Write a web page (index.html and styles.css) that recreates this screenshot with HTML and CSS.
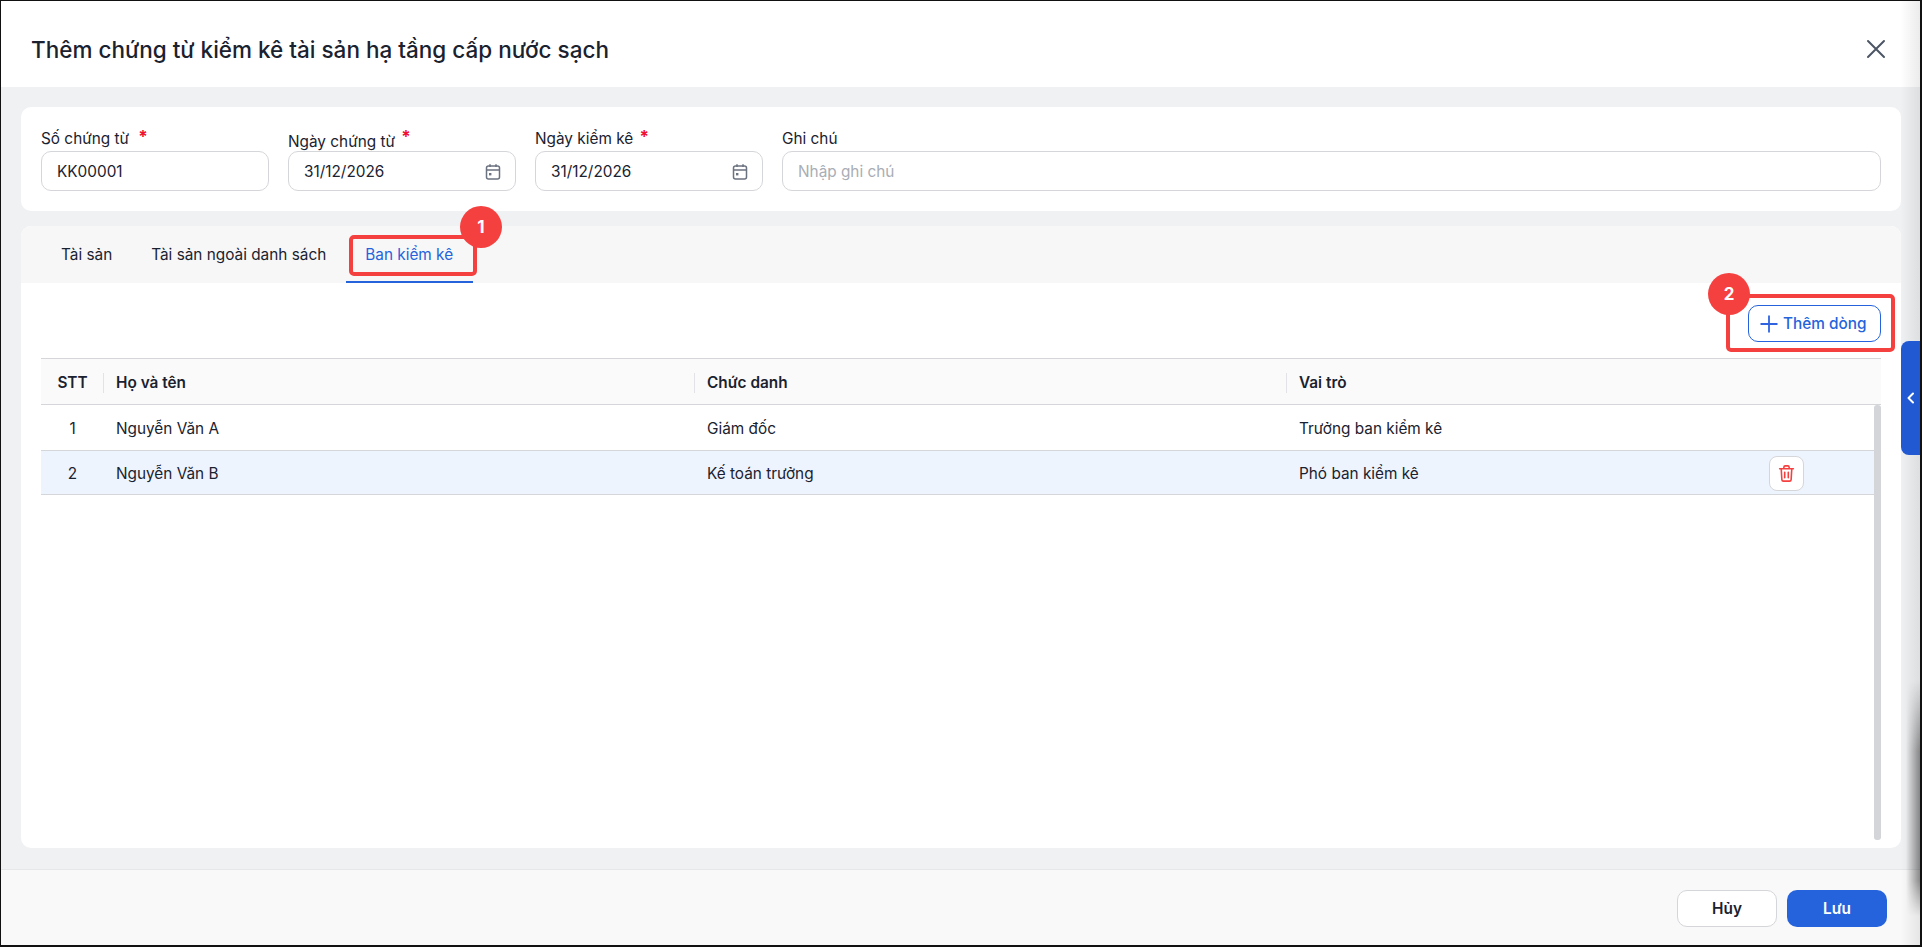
FILE: index.html
```html
<!DOCTYPE html>
<html lang="vi">
<head>
  <meta charset="UTF-8" />
  <title>Thêm chứng từ kiểm kê</title>
  <link rel="stylesheet" href="styles.css">
</head>
<body>
  <div class="dialog">
    <header class="dialog-head">
      <h1>Thêm chứng từ kiểm kê tài sản hạ tầng cấp nước sạch</h1>
      <svg class="close-icon" width="20" height="20" viewBox="0 0 20 20" fill="none" stroke="#4b5563" stroke-width="2" stroke-linecap="round">
        <path d="M2 2L18 18M18 2L2 18"/>
      </svg>
    </header>

    <main class="dialog-body">
      <section class="card form-card">
        <div class="field">
          <label>Số chứng từ <span class="req req-wide">*</span></label>
          <div class="input">KK00001</div>
        </div>
        <div class="field">
          <label>Ngày chứng từ <span class="req req-high">*</span></label>
          <div class="input">31/12/2026
            <svg class="cal-icon" width="18" height="18" viewBox="0 0 18 18" fill="none" stroke="#6b7280" stroke-width="1.5">
              <rect x="2.5" y="3" width="13" height="13" rx="2"/>
              <path d="M2.5 7H15.5M6 1.2V4M12 1.2V4"/>
              <rect x="5" y="10" width="2.4" height="2.4" fill="#6b7280" stroke="none"/>
            </svg>
          </div>
        </div>
        <div class="field">
          <label>Ngày kiểm kê <span class="req">*</span></label>
          <div class="input">31/12/2026
            <svg class="cal-icon" width="18" height="18" viewBox="0 0 18 18" fill="none" stroke="#6b7280" stroke-width="1.5">
              <rect x="2.5" y="3" width="13" height="13" rx="2"/>
              <path d="M2.5 7H15.5M6 1.2V4M12 1.2V4"/>
              <rect x="5" y="10" width="2.4" height="2.4" fill="#6b7280" stroke="none"/>
            </svg>
          </div>
        </div>
        <div class="field field-note">
          <label>Ghi chú</label>
          <div class="input placeholder">Nhập ghi chú</div>
        </div>
      </section>

      <section class="card table-card">
        <nav class="tabs">
          <div class="tab">Tài sản</div>
          <div class="tab">Tài sản ngoài danh sách</div>
          <div class="tab active">Ban kiểm kê</div>
        </nav>
        <div class="table-area">
          <div class="toolbar">
            <button class="add-btn">
              <svg width="20" height="20" viewBox="0 0 20 20" fill="none" stroke="#2f63e0" stroke-width="1.8">
                <path d="M10 1.5V18.5M1.5 10H18.5"/>
              </svg>
              Thêm dòng
            </button>
          </div>
          <div class="grid-row grid-head">
            <div class="cell cell-stt">STT</div>
            <div class="cell">Họ và tên</div>
            <div class="cell">Chức danh</div>
            <div class="cell">Vai trò</div>
          </div>
          <div class="grid-body">
            <div class="rows">
              <div class="grid-row">
                <div class="cell cell-stt">1</div>
                <div class="cell">Nguyễn Văn A</div>
                <div class="cell">Giám đốc</div>
                <div class="cell">Trưởng ban kiểm kê</div>
              </div>
              <div class="grid-row selected">
                <div class="cell cell-stt">2</div>
                <div class="cell">Nguyễn Văn B</div>
                <div class="cell">Kế toán trưởng</div>
                <div class="cell cell-action">Phó ban kiểm kê
                  <button class="del-btn">
                    <svg width="19" height="19" viewBox="0 0 18 18" fill="none" stroke="#f54040" stroke-width="1.5" stroke-linecap="round">
                      <path d="M2.5 4.5H15.5M6.5 4.5V3A1.2 1.2 0 0 1 7.7 1.8H10.3A1.2 1.2 0 0 1 11.5 3V4.5"/>
                      <path d="M4 4.5L4.6 14.8A1.5 1.5 0 0 0 6.1 16.2H11.9A1.5 1.5 0 0 0 13.4 14.8L14 4.5"/>
                      <path d="M7.3 7.8V13M10.7 7.8V13"/>
                    </svg>
                  </button>
                </div>
              </div>
            </div>
            <div class="scrollbar"></div>
          </div>
        </div>
      </section>
    </main>

    <footer class="dialog-foot">
      <button class="btn btn-cancel">Hủy</button>
      <button class="btn btn-save">Lưu</button>
    </footer>

    <div class="edge-shadow"></div>
    <div class="edge-dark"></div>
    <div class="side-handle">
      <svg width="10" height="12" viewBox="0 0 10 12" fill="none" stroke="#fff" stroke-width="2" stroke-linecap="round" stroke-linejoin="round">
        <path d="M7 1.5L2.5 6L7 10.5"/>
      </svg>
    </div>

    <!-- huong dan: khung do va so thu tu -->
    <div class="mark mark-tab"></div>
    <div class="badge badge-tab">1</div>
    <div class="mark mark-add"></div>
    <div class="badge badge-add">2</div>
  </div>
</body>
</html>
```

FILE: styles.css
```css
* {
  box-sizing: border-box;
}

html, body {
  margin: 0;
  height: 947px;
  overflow: hidden;
  background: #ffffff;
}

body {
  font-family: Inter, 'Liberation Sans', sans-serif;
  font-size: 15.35px;
  color: #1a2230;
}

.dialog {
  position: relative;
  display: flex;
  flex-direction: column;
  height: 947px;
  border-top: 1px solid #111;
  border-left: 1px solid #111;
  border-right: 2px solid #111;
  border-bottom: 2px solid #111;
  background: #f0f1f3;
}

.dialog-head {
  display: flex;
  align-items: center;
  justify-content: space-between;
  height: 86px;
  padding: 10px 34px 0 30px;
  background: #ffffff;
}

.dialog-head h1 {
  margin: 0;
  font-size: 22.5px;
  font-weight: 500;
  color: #1a2230;
}

.dialog-body {
  flex: 1;
  display: flex;
  flex-direction: column;
  gap: 15px;
  padding: 20px 19px 21px 20px;
  min-height: 0;
}

.card {
  background: #ffffff;
  border-radius: 10px;
}

.form-card {
  display: flex;
  gap: 19px;
  height: 104px;
  padding: 22px 20px 0;
}

.field {
  width: 228px;
  flex: none;
}

.field-note {
  flex: 1;
}

.field label {
  display: block;
  height: 22px;
  line-height: 20px;
}

.req {
  margin-left: 2px;
  color: #f01030;
  font-size: 17px;
  line-height: 1;
  font-weight: 700;
  vertical-align: 1px;
}

.req-wide {
  margin-left: 5px;
}

.req-high {
  vertical-align: 4px;
  margin-left: 2px;
}

.input {
  display: flex;
  align-items: center;
  justify-content: space-between;
  height: 40px;
  padding: 1px 13px 0 15px;
  border: 1px solid #d5d6da;
  border-radius: 10px;
}

.placeholder {
  color: #a9adb5;
}

.table-card {
  flex: 1;
  display: flex;
  flex-direction: column;
  min-height: 0;
  overflow: hidden;
}

.tabs {
  display: flex;
  height: 57px;
  flex: none;
  padding-left: 20.5px;
  background: #f7f7f7;
}

.tab {
  padding: 0 19.5px;
  line-height: 58px;
}

.tab.active {
  color: #2563dc;
  border-bottom: 2px solid #2563dc;
}

.table-area {
  flex: 1;
  display: flex;
  flex-direction: column;
  min-height: 0;
  padding: 22px 20px 8px;
}

.toolbar {
  display: flex;
  justify-content: flex-end;
  height: 53px;
  flex: none;
}

.add-btn {
  display: flex;
  align-items: center;
  gap: 4px;
  width: 133px;
  height: 37px;
  padding: 0 0 0 10px;
  border: 1px solid #2563dc;
  border-radius: 10px;
  background: #ffffff;
  color: #2563dc;
  font: 500 15.35px Inter, sans-serif;
}

.grid-row {
  display: grid;
  grid-template-columns: 63px 591px 592px 1fr;
  align-items: center;
  height: 46px;
  padding-top: 1px;
  border-bottom: 1px solid #d5d6da;
}

.grid-row.selected {
  height: 44px;
  background: #eef4fd;
}

.grid-head {
  height: 47px;
  flex: none;
  background: #fafafa;
  border-top: 1px solid #d5d6da;
  font-weight: 600;
}

.cell {
  padding: 0 12px;
}

.grid-head .cell {
  position: relative;
}

.grid-head .cell + .cell::before {
  content: '';
  position: absolute;
  left: -1px;
  top: 0;
  height: 20px;
  width: 1px;
  background: #e2e3e6;
}

.cell-stt {
  padding: 0;
  text-align: center;
}

.cell-action {
  display: flex;
  align-items: center;
  justify-content: space-between;
  padding-right: 70px;
}

.del-btn {
  display: flex;
  align-items: center;
  justify-content: center;
  width: 35px;
  height: 35px;
  padding: 0;
  border: 1px solid #d5d6da;
  border-radius: 8px;
  background: #ffffff;
}

.grid-body {
  flex: 1;
  display: flex;
  min-height: 0;
}

.rows {
  flex: 1;
}

.scrollbar {
  width: 7px;
  border-radius: 3px;
  background: #d3d5d9;
}

.dialog-foot {
  display: flex;
  justify-content: flex-end;
  gap: 10px;
  height: 76px;
  flex: none;
  padding: 20px 33px 0 0;
  background: #f9f9f9;
  border-top: 1px solid #e6e7e9;
}

.btn {
  width: 100px;
  height: 37px;
  border-radius: 10px;
  font: 600 15.35px Inter, sans-serif;
}

.btn-cancel {
  background: #ffffff;
  border: 1px solid #d5d6da;
  color: #1a2230;
}

.btn-save {
  background: #2563dc;
  border: none;
  color: #ffffff;
}

.edge-shadow {
  position: absolute;
  top: 0;
  right: 0;
  bottom: 0;
  width: 20px;
  background: linear-gradient(to right, rgba(0, 0, 0, 0), rgba(0, 0, 0, 0.08));
  pointer-events: none;
}

.edge-dark {
  position: absolute;
  top: 680px;
  right: 0;
  width: 14px;
  height: 235px;
  background: linear-gradient(to right, rgba(0, 0, 0, 0), rgba(0, 0, 0, 0.4));
  -webkit-mask-image: linear-gradient(to bottom, transparent, #000 30%, #000 85%, transparent);
  mask-image: linear-gradient(to bottom, transparent, #000 30%, #000 85%, transparent);
  pointer-events: none;
}

.side-handle {
  position: absolute;
  top: 340px;
  right: 0;
  display: flex;
  align-items: center;
  padding-left: 5px;
  width: 19px;
  height: 114px;
  border-radius: 8px 0 0 8px;
  background: #2159d3;
}

.mark {
  position: absolute;
  border: 4px solid #f54040;
  border-radius: 5px;
}

.mark-tab {
  left: 348px;
  top: 234px;
  width: 128px;
  height: 41px;
}

.mark-add {
  left: 1725px;
  top: 293px;
  width: 169px;
  height: 58px;
}

.badge {
  position: absolute;
  display: flex;
  align-items: center;
  justify-content: center;
  width: 42px;
  height: 42px;
  border-radius: 50%;
  background: #f54040;
  color: #ffffff;
  font-size: 17px;
  font-weight: 700;
}

.badge-tab {
  left: 459px;
  top: 205px;
}

.badge-add {
  left: 1707px;
  top: 272px;
}
```
